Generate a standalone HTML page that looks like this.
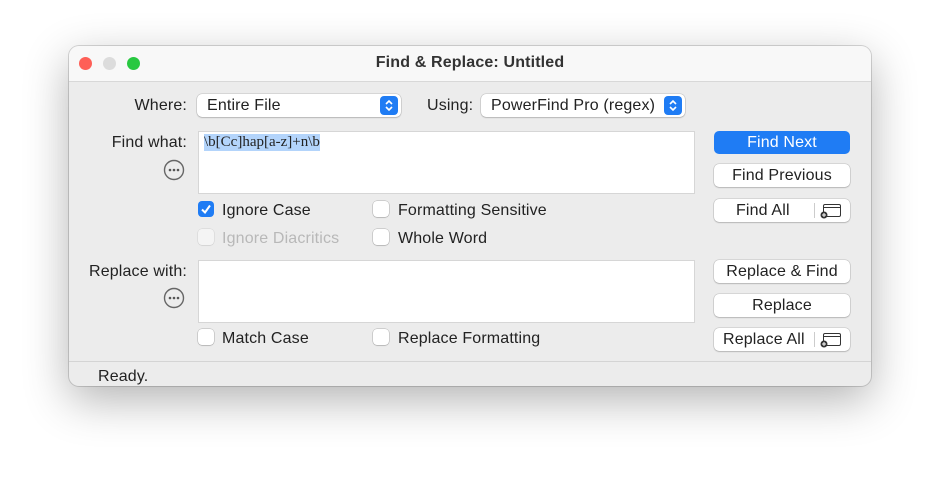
<!DOCTYPE html>
<html><head><style>
body{margin:0;width:940px;height:477px;background:#fff;font-family:"Liberation Sans",sans-serif;font-size:16px;letter-spacing:.15px;color:#222;position:relative;overflow:hidden}
.a{position:absolute}
.win{left:69px;top:46px;width:802px;height:340px;background:#ececec;border-radius:10px;box-shadow:0 14px 45px rgba(0,0,0,.3),0 0 0 1px rgba(0,0,0,.15);overflow:hidden}
.tb{left:0;top:0;width:802px;height:35px;background:#f8f8f8;border-bottom:1px solid #d8d8d8}
.dot{width:13px;height:13px;border-radius:50%;top:11px}
.lbl{text-align:right;width:180px}
.pop{background:#fff;border-radius:5px;box-shadow:0 0 0 .5px rgba(0,0,0,.18),0 1px 1.5px rgba(0,0,0,.15);height:23px;line-height:24px;padding-left:10px;box-sizing:border-box}
.step{position:absolute;right:3px;top:2px;width:18px;height:19px;background:#1f7cf4;border-radius:4px}
.ta{background:#fff;border:1px solid #d6d6d6;box-sizing:border-box}
.btn{left:645px;width:136px;height:23px;background:#fff;border-radius:5px;box-shadow:0 0 0 .5px rgba(0,0,0,.18),0 1px 1.5px rgba(0,0,0,.15);text-align:center;line-height:24px;box-sizing:border-box}
.cb{width:16px;height:16px;border-radius:4px;background:#fff;box-shadow:0 0 0 .5px rgba(0,0,0,.25),0 1px 1px rgba(0,0,0,.1)}
</style></head><body>
<div class="a win">
<div class="a tb"></div>
<div class="a dot" style="left:10px;background:#fe5f57"></div>
<div class="a dot" style="left:34px;background:#dcdcdc"></div>
<div class="a dot" style="left:58px;background:#28c840"></div>
<div class="a" style="left:0;width:802px;top:8px;text-align:center;font-weight:bold;color:#333">Find &amp; Replace: Untitled</div>

<div class="a lbl" style="left:-62px;top:51px">Where:</div>
<div class="a pop" style="left:128px;top:48px;width:204px">Entire File<div class="step"><svg width="18" height="19"><path d="M6 8l3-3 3 3M6 11l3 3 3-3" stroke="#fff" stroke-width="1.6" fill="none"/></svg></div></div>
<div class="a" style="left:358px;top:51px">Using:</div>
<div class="a pop" style="left:412px;top:48px;width:204px">PowerFind Pro (regex)<div class="step"><svg width="18" height="19"><path d="M6 8l3-3 3 3M6 11l3 3 3-3" stroke="#fff" stroke-width="1.6" fill="none"/></svg></div></div>

<div class="a lbl" style="left:-62px;top:88px">Find what:</div>
<div class="a ta" style="left:129px;top:85px;width:497px;height:63px"><span style="position:absolute;left:5px;top:2px;font-family:'Liberation Serif',serif;font-size:15px;letter-spacing:0;background:#b3d4fb;color:#222">\b[Cc]hap[a-z]+n\b</span></div>
<svg class="a" style="left:94px;top:113px" width="22" height="22"><circle cx="11" cy="11" r="9.5" fill="none" stroke="#666" stroke-width="1.4"/><circle cx="7" cy="11" r="1.3" fill="#555"/><circle cx="11" cy="11" r="1.3" fill="#555"/><circle cx="15" cy="11" r="1.3" fill="#555"/></svg>

<div class="a cb" style="left:129px;top:155px;background:#1f7cf4;box-shadow:none"><svg width="16" height="16"><path d="M4 8.5l3 3 5-7" stroke="#fff" stroke-width="2" fill="none"/></svg></div>
<div class="a" style="left:153px;top:156px">Ignore Case</div>
<div class="a cb" style="left:304px;top:155px"></div>
<div class="a" style="left:329px;top:156px">Formatting Sensitive</div>
<div class="a cb" style="left:129px;top:183px;opacity:.45"></div>
<div class="a" style="left:153px;top:184px;color:#b8b8b8">Ignore Diacritics</div>
<div class="a cb" style="left:304px;top:183px"></div>
<div class="a" style="left:329px;top:184px">Whole Word</div>

<div class="a lbl" style="left:-62px;top:217px">Replace with:</div>
<div class="a ta" style="left:129px;top:214px;width:497px;height:63px"></div>
<svg class="a" style="left:94px;top:241px" width="22" height="22"><circle cx="11" cy="11" r="9.5" fill="none" stroke="#666" stroke-width="1.4"/><circle cx="7" cy="11" r="1.3" fill="#555"/><circle cx="11" cy="11" r="1.3" fill="#555"/><circle cx="15" cy="11" r="1.3" fill="#555"/></svg>
<div class="a cb" style="left:129px;top:283px"></div>
<div class="a" style="left:153px;top:284px">Match Case</div>
<div class="a cb" style="left:304px;top:283px"></div>
<div class="a" style="left:329px;top:284px">Replace Formatting</div>

<div class="a btn" style="top:85px;background:#1f7cf4;color:#fff;box-shadow:none">Find Next</div>
<div class="a btn" style="top:118px">Find Previous</div>
<div class="a btn" style="top:153px;text-align:left;padding-left:22px">Find All<span style="position:absolute;left:100px;top:4px;height:15px;border-left:1px solid #ccc"></span><svg style="position:absolute;left:106px;top:4px" width="22" height="16" viewBox="0 0 22 16"><rect x="3.5" y="1.5" width="17" height="12" rx="1.5" fill="none" stroke="#333"/><line x1="3.5" y1="4.5" x2="20.5" y2="4.5" stroke="#333"/><circle cx="4" cy="12" r="3.5" fill="#333"/><path d="M4 10v4M2 12h4" stroke="#fff"/></svg></div>
<div class="a btn" style="top:214px">Replace &amp; Find</div>
<div class="a btn" style="top:248px">Replace</div>
<div class="a btn" style="top:282px;text-align:left;padding-left:9px">Replace All<span style="position:absolute;left:100px;top:4px;height:15px;border-left:1px solid #ccc"></span><svg style="position:absolute;left:106px;top:4px" width="22" height="16" viewBox="0 0 22 16"><rect x="3.5" y="1.5" width="17" height="12" rx="1.5" fill="none" stroke="#333"/><line x1="3.5" y1="4.5" x2="20.5" y2="4.5" stroke="#333"/><circle cx="4" cy="12" r="3.5" fill="#333"/><path d="M4 10v4M2 12h4" stroke="#fff"/></svg></div>

<div class="a" style="left:0;top:315px;width:802px;border-top:1px solid #d4d4d4"></div>
<div class="a" style="left:29px;top:322px">Ready.</div>
</div>
</body></html>
